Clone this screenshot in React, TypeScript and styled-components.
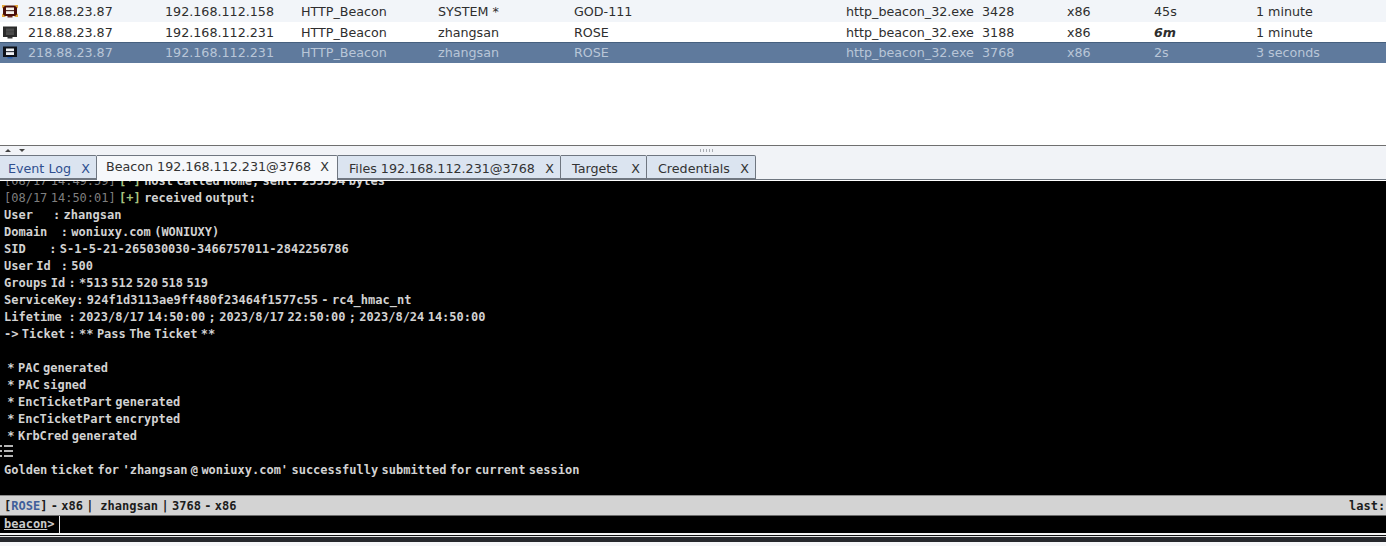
import React from "react";
import styled, { createGlobalStyle } from "styled-components";

const GlobalStyle = createGlobalStyle`
  html, body {
    margin: 0;
    padding: 0;
    background: #fff;
    overflow: hidden;
  }
`;

const Page = styled.div`
  width: 1386px;
  height: 546px;
  display: flex;
  flex-direction: column;
  overflow: hidden;
  position: relative;
  font-family: "DejaVu Sans", sans-serif;
`;

const Table = styled.div`
  height: 145px;
  flex: none;
  background: #fff;
  border-bottom: 1px solid #6f6f6f;
`;

const Row = styled.div<{ $kind: "alt" | "plain" | "selected" }>`
  height: 20.5px;
  display: grid;
  grid-template-columns: 28px 137px 136px 137px 136px 272px 136px 85px 87px 102px 1fr;
  align-items: center;
  font-size: 12.7px;
  white-space: nowrap;
  color: ${(p) => (p.$kind === "selected" ? "#b9c6d8" : "#2e2e2e")};
  background: ${(p) =>
    p.$kind === "selected" ? "#5f7a9d" : p.$kind === "alt" ? "#f2f5f9" : "#fff"};
  border-top: ${(p) => (p.$kind === "selected" ? "1px solid #46607f" : "none")};
  box-sizing: border-box;

  &:first-child {
    height: 22px;
    padding-top: 1.5px;
  }

  &:nth-child(2) {
    height: 20px;
  }
`;

const IconCell = styled.div`
  display: flex;
  padding-left: 2px;
`;

const Session = styled.span`
  font-style: italic;
  font-weight: bold;
`;

const Splitter = styled.div`
  height: 9px;
  flex: none;
  background: #f1f3f7;
  display: flex;
  align-items: center;
  justify-content: space-between;
  padding: 0 671px 0 5px;
  box-sizing: border-box;
`;

const Arrows = styled.div`
  display: flex;
  gap: 8px;
`;

const Arrow = styled.span<{ $up?: boolean }>`
  width: 0;
  height: 0;
  border-left: 3px solid transparent;
  border-right: 3px solid transparent;
  ${(p) => (p.$up ? "border-bottom: 3px solid #444;" : "border-top: 3px solid #444;")}
`;

const Grip = styled.div`
  width: 15px;
  height: 3px;
  background: repeating-linear-gradient(90deg, #a9adb3 0 1px, transparent 1px 3px);
`;

const TabBar = styled.div`
  height: 25px;
  flex: none;
  display: flex;
  align-items: stretch;
  background: #f1f3f7;
  border-bottom: 1px solid #6f7680;
  box-sizing: border-box;
`;

const Tab = styled.div<{ $width: number; $active?: boolean; $accent?: boolean }>`
  width: ${(p) => p.$width}px;
  box-sizing: border-box;
  display: flex;
  align-items: center;
  justify-content: space-between;
  padding: ${(p) => (p.$active ? "0 8px 3px 9px" : "2px 6px 0 11px")};
  font-size: 12.7px;
  white-space: nowrap;
  color: ${(p) => (p.$accent ? "#2f4f8f" : "#333")};
  background: ${(p) => (p.$active ? "#f6f8fb" : "#dbe4f0")};
  border: 1px solid #6f7680;
  border-left: none;
  border-bottom: ${(p) => (p.$active ? "none" : "1px solid #6f7680")};
  border-radius: 0 2px 0 0;
  margin-bottom: ${(p) => (p.$active ? "-1px" : "0")};
  position: relative;
  z-index: ${(p) => (p.$active ? 1 : 0)};

  &:first-child {
    padding-left: 8px;
  }
`;

const Console = styled.div`
  height: 314px;
  margin-top: 1px;
  flex: none;
  background: #000;
  overflow: hidden;
  position: relative;
`;

const Log = styled.div`
  margin-top: -8px;
  padding-left: 4px;
  font-family: "DejaVu Sans Mono", monospace;
  font-size: 12px;
  font-weight: bold;
  line-height: 17px;
  word-spacing: -3.87px;
  color: #d2d2d2;
`;

const Line = styled.div`
  height: 17px;
  white-space: pre;
`;

const Stamp = styled.span`
  color: #7f7f7f;
  font-weight: normal;
`;

const Plus = styled.span`
  color: #a9c47f;
`;

const ListMark = styled.svg`
  position: absolute;
  left: 0;
  top: 263px;
`;

const StatusBar = styled.div`
  height: 21px;
  flex: none;
  box-sizing: border-box;
  display: flex;
  align-items: center;
  justify-content: space-between;
  padding-left: 4px;
  background: #d3d3d3;
  border-top: 1px solid #8c8c8c;
  border-bottom: 1px solid #6c6c6c;
  font-family: "DejaVu Sans Mono", monospace;
  font-size: 12px;
  font-weight: bold;
  word-spacing: -3.87px;
  color: #1c1c1c;
  white-space: pre;
`;

const Host = styled.span`
  color: #3f5f9a;
`;

const Last = styled.div`
  width: 37px;
  overflow: hidden;
`;

const Prompt = styled.div`
  height: 17px;
  flex: none;
  background: #000;
  display: flex;
  padding-left: 4px;
  font-family: "DejaVu Sans Mono", monospace;
  font-size: 12px;
  font-weight: bold;
  line-height: 17px;
  color: #c9c9c9;
`;

const PromptLabel = styled.span`
  text-decoration: underline;
`;

const Caret = styled.span`
  width: 1px;
  background: #e8e8e8;
  margin-left: 4px;
`;

const Rule = styled.div<{ $height: number; $color: string }>`
  height: ${(p) => p.$height}px;
  flex: none;
  background: ${(p) => p.$color};
`;

function Monitor({
  frame,
  screen,
  bar,
  stand,
  corners,
}: {
  frame: string;
  screen: string;
  bar: string;
  stand: string;
  corners?: string;
}) {
  return (
    <svg width="16" height="15" viewBox="0 0 16 15">
      <rect x="1" y="1.5" width="14" height="10.5" fill={frame} />
      {corners && <path d="M0 1h4L0 4.5zM16 1h-4l4 3.5zM0 13h4L0 9.5zM16 13h-4l4-3.5z" fill={corners} />}
      <rect x="4" y="3.5" width="8" height="6.5" fill={screen} />
      <rect x="4" y="6" width="8" height="1.2" fill={bar} />
      <rect x="5.5" y="12" width="5" height="1.5" fill={stand} />
    </svg>
  );
}

const rows = [
  {
    kind: "alt" as const,
    icon: <Monitor frame="#4a0f0a" screen="#f5f1ec" bar="#5a3a36" stand="#6b2a20" corners="#e2a63c" />,
    cells: ["218.88.23.87", "192.168.112.158", "HTTP_Beacon", "SYSTEM *", "GOD-111", "http_beacon_32.exe", "3428", "x86", "45s", "1 minute"],
  },
  {
    kind: "plain" as const,
    icon: <Monitor frame="#2b2b2b" screen="#4c4c4c" bar="#444" stand="#333" />,
    cells: ["218.88.23.87", "192.168.112.231", "HTTP_Beacon", "zhangsan", "ROSE", "http_beacon_32.exe", "3188", "x86", <Session>6m</Session>, "1 minute"],
  },
  {
    kind: "selected" as const,
    icon: <Monitor frame="#0c1018" screen="#f0f2f5" bar="#3a3f48" stand="#2a5fb0" />,
    cells: ["218.88.23.87", "192.168.112.231", "HTTP_Beacon", "zhangsan", "ROSE", "http_beacon_32.exe", "3768", "x86", "2s", "3 seconds"],
  },
];

const tabs = [
  { label: "Event Log", width: 97, accent: true },
  { label: "Beacon 192.168.112.231@3768", width: 241, active: true },
  { label: "Files 192.168.112.231@3768", width: 223 },
  { label: "Targets", width: 86 },
  { label: "Credentials", width: 109 },
];

const output = [
  "User      : zhangsan",
  "Domain    : woniuxy.com (WONIUXY)",
  "SID       : S-1-5-21-265030030-3466757011-2842256786",
  "User Id   : 500",
  "Groups Id : *513 512 520 518 519",
  "ServiceKey: 924f1d3113ae9ff480f23464f1577c55 - rc4_hmac_nt",
  "Lifetime  : 2023/8/17 14:50:00 ; 2023/8/17 22:50:00 ; 2023/8/24 14:50:00",
  "-> Ticket : ** Pass The Ticket **",
  " ",
  " * PAC generated",
  " * PAC signed",
  " * EncTicketPart generated",
  " * EncTicketPart encrypted",
  " * KrbCred generated",
  " ",
  "Golden ticket for 'zhangsan @ woniuxy.com' successfully submitted for current session",
];

export default function App() {
  return (
    <Page>
      <GlobalStyle />
      <Table>
        {rows.map((row, i) => (
          <Row key={i} $kind={row.kind}>
            <IconCell>{row.icon}</IconCell>
            {row.cells.map((cell, j) => (
              <span key={j}>{cell}</span>
            ))}
          </Row>
        ))}
      </Table>
      <Splitter>
        <Arrows>
          <Arrow $up />
          <Arrow />
        </Arrows>
        <Grip />
      </Splitter>
      <TabBar>
        {tabs.map((tab) => (
          <Tab key={tab.label} $width={tab.width} $active={tab.active} $accent={tab.accent}>
            <span>{tab.label}</span>
            <span>X</span>
          </Tab>
        ))}
      </TabBar>
      <Console>
        <Log>
          <Line>
            <Stamp>[08/17 14:49:59]</Stamp> <Plus>[*]</Plus> host called home, sent: 255394 bytes
          </Line>
          <Line>
            <Stamp>[08/17 14:50:01]</Stamp> <Plus>[+]</Plus> received output:
          </Line>
          {output.map((text, i) => (
            <Line key={i}>{text}</Line>
          ))}
        </Log>
        <ListMark width="14" height="14" viewBox="0 0 14 14">
          <path d="M4 2h9M4 7h9M4 12h9M0 2h2M0 7h2M0 12h2" stroke="#f2f2f2" strokeWidth="1.6" fill="none" />
        </ListMark>
      </Console>
      <StatusBar>
        <span>
          [<Host>ROSE</Host>] - x86 |  zhangsan | 3768 - x86
        </span>
        <Last>last: 2s</Last>
      </StatusBar>
      <Prompt>
        <PromptLabel>beacon</PromptLabel>&gt;
        <Caret />
      </Prompt>
      <Rule $height={2} $color="#f4f4f4" />
      <Rule $height={1} $color="#111" />
      <Rule $height={1} $color="#e8e8e8" />
      <Rule $height={5} $color="#26282c" />
      <Rule $height={4} $color="#f6f7f9" />
    </Page>
  );
}
